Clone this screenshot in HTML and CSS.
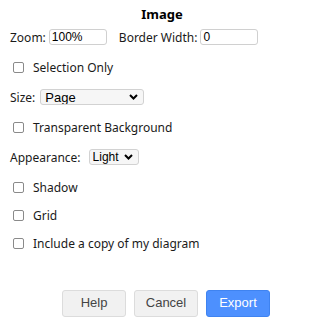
FILE: index.html
```html
<!DOCTYPE html>
<html lang="en">
<head>
    <meta charset="UTF-8">
    <title>Image</title>
    <link rel="stylesheet" href="styles.css">
</head>
<body>
    <div class="dialog">
        <div class="title">Image</div>

        <div class="row">
            <label for="zoom">Zoom:</label>
            <input type="text" id="zoom" class="field" value="100%">
            <label for="border" class="spaced">Border Width:</label>
            <input type="text" id="border" class="field" value="0">
        </div>

        <div class="row">
            <input type="checkbox" id="selection">
            <label for="selection">Selection Only</label>
        </div>

        <div class="row">
            <label for="size">Size:</label>
            <select id="size" class="picker size-picker">
                <option>Page</option>
            </select>
        </div>

        <div class="row">
            <input type="checkbox" id="transparent">
            <label for="transparent">Transparent Background</label>
        </div>

        <div class="row">
            <label for="appearance">Appearance:</label>
            <select id="appearance" class="picker look-picker">
                <option>Light</option>
            </select>
        </div>

        <div class="row">
            <input type="checkbox" id="shadow">
            <label for="shadow">Shadow</label>
        </div>

        <div class="row tight">
            <input type="checkbox" id="grid">
            <label for="grid">Grid</label>
        </div>

        <div class="row tight">
            <input type="checkbox" id="include">
            <label for="include">Include a copy of my diagram</label>
        </div>

        <div class="buttons">
            <button class="btn">Help</button>
            <button class="btn">Cancel</button>
            <button class="btn primary">Export</button>
        </div>
    </div>
</body>
</html>
```

FILE: styles.css
```css
/* General Styles */
body {
    margin: 0;
    padding: 0;
    background: #fff;
    color: #1a1a1a;
    font-family: 'Segoe UI', 'Noto Sans', sans-serif;
    font-size: 12px;
}

.dialog {
    width: 320px;
    box-sizing: border-box;
    padding: 0 10px;
    display: flex;
    flex-direction: column;
    gap: 2px;
}

.title {
    height: 18px;
    line-height: 18px;
    padding: 5px 0 0 4px;
    margin-bottom: -2px;
    text-align: center;
    font-weight: bold;
    font-size: 13px;
    color: #000;
}

/* Rows */
.row {
    height: 28px;
    display: flex;
    align-items: center;
    white-space: nowrap;
}

.row.tight {
    margin-top: -2px;
}

.row input[type="checkbox"] {
    width: 11px;
    height: 11px;
    margin: 0 9px 0 3px;
    appearance: none;
    border: 1px solid #8a8a8a;
    border-radius: 2px;
    background: #fff;
}

.spaced {
    margin-left: 12px;
}

/* Text fields and selects */
.field {
    width: 58px;
    height: 16px;
    box-sizing: border-box;
    margin-left: 3px;
    padding: 0 2px;
    border: 1px solid #d0d0d0;
    border-radius: 3px;
    font-family: 'Liberation Sans', Arial, sans-serif;
    font-size: 12px;
    color: #000;
}

.picker {
    height: 16px;
    box-sizing: border-box;
    margin-left: 4px;
    padding: 0 0 0 4px;
    border: 1px solid #d2d2d2;
    border-radius: 3px;
    background: #f6f6f6 url("data:image/svg+xml,%3Csvg xmlns='http://www.w3.org/2000/svg' width='9' height='6'%3E%3Cpath d='M1 1l3.5 3.5L8 1' fill='none' stroke='%23000' stroke-width='2'/%3E%3C/svg%3E") no-repeat right 5px center;
    appearance: none;
    font-family: 'Liberation Sans', Arial, sans-serif;
    font-size: 13px;
    color: #000;
}

.size-picker {
    width: 104px;
    margin-left: 5px;
}

.look-picker {
    width: 50px;
    margin-left: 8px;
    padding-left: 3px;
    font-size: 12px;
}

/* Buttons */
.buttons {
    display: flex;
    justify-content: flex-end;
    gap: 8px;
    margin-top: 31px;
    padding-right: 40px;
}

.btn {
    width: 64px;
    height: 27px;
    padding: 0 0 2px;
    border: 1px solid #dcdcdc;
    border-radius: 3px;
    background: #f1f1f1;
    color: #444;
    font-family: 'Liberation Sans', Arial, sans-serif;
    font-size: 13px;
}

.btn.primary {
    background: #4d90fe;
    border-color: #3f83f0;
    color: #fff;
}
```
